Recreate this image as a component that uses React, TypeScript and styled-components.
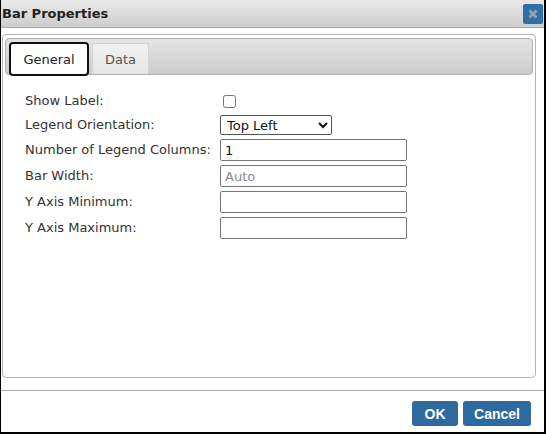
import React from "react";
import styled, { createGlobalStyle } from "styled-components";

const Global = createGlobalStyle`
  html, body { margin: 0; padding: 0; background: #fff; }
  body { font-family: "DejaVu Sans", Verdana, sans-serif; }
`;

const Dialog = styled.div`
  box-sizing: border-box;
  width: 546px;
  height: 434px;
  border-style: solid;
  border-color: #000;
  border-width: 0 2px 2px 1px;
  display: flex;
  flex-direction: column;
  background: #fff;
`;

const TitleBar = styled.div`
  height: 28px;
  box-sizing: border-box;
  display: flex;
  align-items: center;
  justify-content: space-between;
  padding: 0 1px 0 1px;
  background: linear-gradient(#e9e9e9, #cdcdcd);
  border-bottom: 1px solid #a9a9a9;
`;

const Title = styled.span`
  font-family: "DejaVu Sans", Verdana, sans-serif;
  font-weight: bold;
  font-size: 13px;
  color: #222;
`;

const CloseButton = styled.button`
  width: 20px;
  height: 20px;
  margin-top: 1px;
  padding: 0;
  border: none;
  border-radius: 2px;
  background: #2f6ea6;
  display: flex;
  align-items: center;
  justify-content: center;
`;

const Body = styled.div`
  flex: 1;
  display: flex;
  flex-direction: column;
  padding: 6px 8px 12px 1px;
`;

const Panel = styled.div`
  flex: 1;
  border: 1px solid #b4b4b4;
  border-radius: 4px;
  padding: 3px 2px;
`;

const TabBar = styled.div`
  height: 37px;
  box-sizing: border-box;
  border: 1px solid #b0b0b0;
  border-radius: 4px;
  background: linear-gradient(#e4e4e4, #cbcbcb);
  display: flex;
  align-items: flex-end;
  gap: 3px;
  padding: 0 0 0 3px;
`;

const Tab = styled.div<{ $active?: boolean }>`
  box-sizing: border-box;
  display: flex;
  align-items: center;
  justify-content: center;
  font-family: "DejaVu Sans", Verdana, sans-serif;
  font-size: 13px;
  color: ${(p) => (p.$active ? "#222" : "#555")};
  ${(p) =>
    p.$active
      ? `width: 80px; height: 34px; margin-bottom: -2px; background: #fff; border: 2px solid #111; border-radius: 4px;`
      : `width: 57px; height: 31px; background: linear-gradient(#f1f1f1, #e6e6e6); border: 1px solid #d3d3d3; border-bottom: none; border-radius: 3px 3px 0 0;`}
`;

const Form = styled.div`
  display: grid;
  grid-template-columns: 195px auto;
  row-gap: 4px;
  padding: 16px 0 0 20px;
  align-items: center;
  justify-items: start;
`;

const Label = styled.label`
  font-family: "DejaVu Sans", Verdana, sans-serif;
  font-size: 13px;
  color: #333;
  line-height: 20px;
`;

const TextInput = styled.input`
  box-sizing: border-box;
  width: 187px;
  height: 22px;
  border: 1px solid #767676;
  border-radius: 2px;
  padding: 0 4px;
  font-family: "DejaVu Sans", Verdana, sans-serif;
  font-size: 13px;
  color: #111;
  &::placeholder { color: #8a8a8a; }
`;

const Select = styled.select`
  box-sizing: border-box;
  width: 112px;
  height: 20px;
  border: 1px solid #555;
  border-radius: 2px;
  padding: 0 2px;
  font-family: "DejaVu Sans", Verdana, sans-serif;
  font-size: 13px;
  color: #111;
  background: #fff;
`;

const Check = styled.input`
  width: 13px;
  height: 13px;
  margin: 0 0 0 3px;
`;

const Footer = styled.div`
  height: 42px;
  box-sizing: border-box;
  border-top: 1px solid #aaa;
  display: flex;
  justify-content: flex-end;
  align-items: flex-start;
  gap: 5px;
  padding: 10px 13px 0 0;
`;

const Button = styled.button<{ $w: number }>`
  width: ${(p) => p.$w}px;
  height: 25px;
  border: none;
  border-radius: 3px;
  background: #2e6aa0;
  color: #fff;
  font-family: "Liberation Sans", Arial, sans-serif;
  font-weight: bold;
  font-size: 14px;
  padding: 0;
`;

export default function App() {
  return (
    <>
      <Global />
      <Dialog>
        <TitleBar>
          <Title>Bar Properties</Title>
          <CloseButton aria-label="close">
            <svg width="10" height="10" viewBox="0 0 10 10">
              <path d="M1.5 1.5 L8.5 8.5 M8.5 1.5 L1.5 8.5" stroke="#9aa3ad" strokeWidth="2.6" />
            </svg>
          </CloseButton>
        </TitleBar>
        <Body>
          <Panel>
            <TabBar>
              <Tab $active>General</Tab>
              <Tab>Data</Tab>
            </TabBar>
            <Form>
              <Label>Show Label:</Label>
              <Check type="checkbox" />
              <Label>Legend Orientation:</Label>
              <Select defaultValue="Top Left">
                <option>Top Left</option>
                <option>Top Right</option>
                <option>Bottom Left</option>
                <option>Bottom Right</option>
              </Select>
              <Label>Number of Legend Columns:</Label>
              <TextInput defaultValue="1" />
              <Label>Bar Width:</Label>
              <TextInput placeholder="Auto" />
              <Label>Y Axis Minimum:</Label>
              <TextInput />
              <Label>Y Axis Maximum:</Label>
              <TextInput />
            </Form>
          </Panel>
        </Body>
        <Footer>
          <Button $w={46}>OK</Button>
          <Button $w={68}>Cancel</Button>
        </Footer>
      </Dialog>
    </>
  );
}
